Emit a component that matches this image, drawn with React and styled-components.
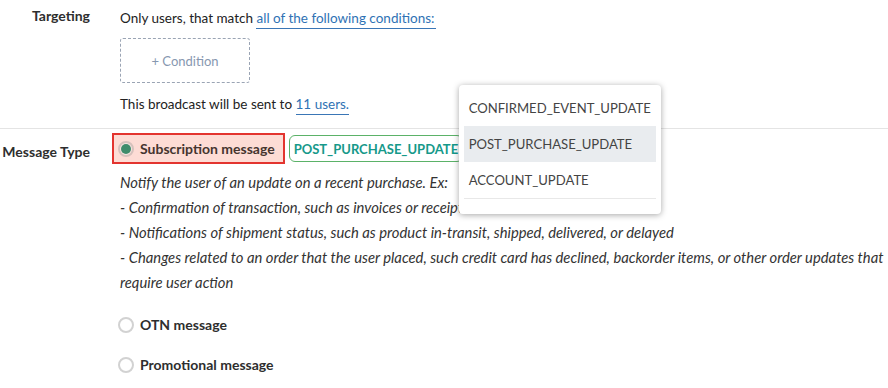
import React from "react";
import styled, { createGlobalStyle } from "styled-components";

const Global = createGlobalStyle`
  html, body { margin: 0; padding: 0; background: #fff; }
  body { font-family: Lato, "Liberation Sans", sans-serif; font-size: 14px; color: #333; }
`;

const Page = styled.div`
  width: 888px;
  height: 388px;
  overflow: hidden;
`;

const Section = styled.section`
  display: grid;
  grid-template-columns: 90px 1fr;
  column-gap: 30px;
  padding: ${(p) => p.$pad};
  border-top: ${(p) => (p.$divider ? "1px solid #e4e4e4" : "none")};
`;

const Label = styled.div`
  text-align: right;
  font-weight: 700;
  font-size: 14px;
  line-height: 20px;
  color: #2e2e2e;
  padding-top: ${(p) => p.$top || 0}px;
`;

const Content = styled.div`
  display: flex;
  flex-direction: column;
  align-items: flex-start;
`;

const Line = styled.div`
  font-size: 13.5px;
  line-height: 20px;
  color: #222;
  margin-top: ${(p) => p.$mt || 0}px;
`;

const Link = styled.a`
  color: #2f72b4;
  text-decoration: none;
  border-bottom: 1px solid #3a76b6;
  padding-bottom: 2px;
  padding-right: ${(p) => p.$pr || 0}px;
`;

const ConditionBox = styled.div`
  margin-top: 10px;
  width: 130px;
  height: 45px;
  box-sizing: border-box;
  border: 1px dashed #9aa4b4;
  border-radius: 3px;
  display: flex;
  align-items: center;
  justify-content: center;
  color: #8797b0;
  font-size: 13px;
`;

const OptionRow = styled.div`
  display: flex;
  align-items: center;
  gap: 4px;
`;

const RadioOption = styled.label`
  display: flex;
  align-items: center;
  gap: 6px;
  height: 31px;
  box-sizing: border-box;
  margin-left: -8px;
  padding: 0 8px 0 4px;
  background: ${(p) => (p.$highlight ? "#fddcd5" : "transparent")};
  border: 2px solid ${(p) => (p.$highlight ? "#e3342f" : "transparent")};
  font-weight: 700;
  font-size: 14px;
  color: ${(p) => (p.$highlight ? "#45352f" : "#2e2e2e")};
  cursor: pointer;
`;

const Radio = styled.span`
  width: 16px;
  height: 16px;
  box-sizing: border-box;
  border-radius: 50%;
  border: 2px solid ${(p) => (p.$checked ? "#d7c1bc" : "#d2d2d2")};
  background: ${(p) => (p.$checked ? "#f7e6e2" : "#fff")};
  display: flex;
  align-items: center;
  justify-content: center;
  &::after {
    content: "";
    width: 10px;
    height: 10px;
    border-radius: 50%;
    background: #3f8c6c;
    display: ${(p) => (p.$checked ? "block" : "none")};
  }
`;

const TagWrap = styled.div`
  position: relative;
`;

const Tag = styled.div`
  height: 27px;
  box-sizing: border-box;
  border: 1px solid #5bb268;
  border-radius: 6px;
  padding: 0 4px;
  display: flex;
  align-items: center;
  color: #16998a;
  font-weight: 700;
  font-size: 13px;
  white-space: nowrap;
`;

const Menu = styled.ul`
  position: absolute;
  left: 170px;
  top: -50px;
  width: 202px;
  box-sizing: border-box;
  margin: 0;
  padding: 5px 5px 15px;
  list-style: none;
  background: #fff;
  border-radius: 4px;
  box-shadow: 0 1px 6px rgba(0, 0, 0, 0.35);
  z-index: 5;
`;

const MenuItem = styled.li`
  height: 36px;
  display: flex;
  align-items: center;
  padding-left: 5px;
  font-size: 13.1px;
  color: #444;
  background: ${(p) => (p.$active ? "#e9ecef" : "transparent")};
  border-bottom: ${(p) => (p.$last ? "1px solid #e8e8e8" : "none")};
  white-space: nowrap;
`;

const Description = styled.div`
  margin-top: 6px;
  font-style: italic;
  font-size: 14.8px;
  line-height: 25px;
  color: #333;
  white-space: nowrap;
`;

const PlainOption = styled(RadioOption)`
  margin-top: ${(p) => p.$mt}px;
`;

export default function App() {
  return (
    <Page>
      <Global />
      <Section $pad="6px 0 14px">
        <Label>Targeting</Label>
        <Content>
          <Line $mt={2}>
            Only users, that match <Link $pr={2}>all of the following conditions:</Link>
          </Line>
          <ConditionBox>+ Condition</ConditionBox>
          <Line $mt={11}>
            This broadcast will be sent to <Link>11 users.</Link>
          </Line>
        </Content>
      </Section>
      <Section $divider $pad="4px 0 0">
        <Label $top={9}>Message Type</Label>
        <Content>
          <OptionRow>
            <RadioOption $highlight>
              <Radio $checked />
              Subscription message
            </RadioOption>
            <TagWrap>
              <Tag>POST_PURCHASE_UPDATE</Tag>
              <Menu>
                <MenuItem>CONFIRMED_EVENT_UPDATE</MenuItem>
                <MenuItem $active>POST_PURCHASE_UPDATE</MenuItem>
                <MenuItem $last>ACCOUNT_UPDATE</MenuItem>
              </Menu>
            </TagWrap>
          </OptionRow>
          <Description>
            <div>Notify the user of an update on a recent purchase. Ex:</div>
            <div>- Confirmation of transaction, such as invoices or receipts</div>
            <div>- Notifications of shipment status, such as product in-transit, shipped, delivered, or delayed</div>
            <div>- Changes related to an order that the user placed, such credit card has declined, backorder items, or other order updates that</div>
            <div>require user action</div>
          </Description>
          <PlainOption $mt={14}>
            <Radio />
            OTN message
          </PlainOption>
          <PlainOption $mt={9}>
            <Radio />
            Promotional message
          </PlainOption>
        </Content>
      </Section>
    </Page>
  );
}
